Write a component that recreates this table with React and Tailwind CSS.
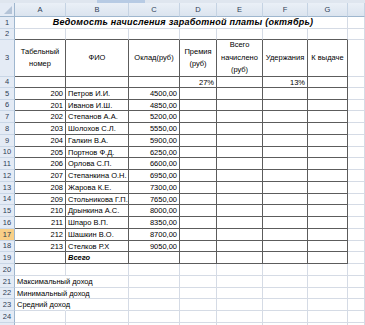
import React from "react";

const emp = [
  [200, "Петров И.И.", "4500,00"],
  [201, "Иванов И.Ш.", "4850,00"],
  [202, "Степанов А.А.", "5200,00"],
  [203, "Шолохов С.Л.", "5550,00"],
  [204, "Галкин В.А.", "5900,00"],
  [205, "Портнов Ф.Д.", "6250,00"],
  [206, "Орлова С.П.", "6600,00"],
  [207, "Степанкина О.Н.", "6950,00"],
  [208, "Жарова К.Е.", "7300,00"],
  [209, "Стольникова Г.П.", "7650,00"],
  [210, "Дрынкина А.С.", "8000,00"],
  [211, "Шпаро В.П.", "8350,00"],
  [212, "Шашкин В.О.", "8700,00"],
  [213, "Стелков Р.Х", "9050,00"],
];

const DARK = "border-r border-b border-r-[#5c5c5c] border-b-[#5c5c5c]";
const LIGHT = "border-r border-b border-r-[#d5dbe5] border-b-[#d5dbe5]";
const TOPDARK = "border-r border-b border-r-[#d5dbe5] border-b-[#5c5c5c]";

const HEADS = [
  ["Табельный", "номер"],
  ["ФИО"],
  ["Оклад(руб)"],
  ["Премия", "(руб)"],
  ["Всего", "начислено", "(руб)"],
  ["Удержания"],
  ["К выдаче"],
];

function cellContent(r, c) {
  if (r === 4) {
    if (c === 3) return { text: "27%", cls: "justify-end" };
    if (c === 5) return { text: "13%", cls: "justify-end" };
  }
  if (r >= 5 && r <= 18) {
    const e = emp[r - 5];
    if (c === 0) return { text: String(e[0]), cls: "justify-end" };
    if (c === 1) return { text: e[1], cls: "justify-start" };
    if (c === 2) return { text: e[2], cls: "justify-end" };
  }
  if (r === 19 && c === 1) return { text: "Всего", cls: "justify-start font-bold italic" };
  if (c === 0 && r === 21) return { text: "Максимальный доход", cls: "justify-start", ov: true };
  if (c === 0 && r === 22) return { text: "Минимальный доход", cls: "justify-start", ov: true };
  if (c === 0 && r === 23) return { text: "Средний доход", cls: "justify-start", ov: true };
  return { text: "", cls: "" };
}

function RowHeader({ r }) {
  const sel = r === 17;
  return (
    <div
      className={
        sel
          ? "border-r border-b border-r-[#9eb6ce] border-b-[#c9d6e6] bg-[#f8cf86] text-[#2b3a4e] flex items-center justify-center"
          : "border-r border-b border-r-[#9eb6ce] border-b-[#c9d6e6] bg-[#e4ebf5] text-[#2f4056] flex items-center justify-center"
      }
    >
      {r <= 24 ? r : ""}
    </div>
  );
}

function Row({ r }) {
  if (r === 1) {
    return (
      <>
        <RowHeader r={r} />
        <div className={"col-span-7 flex items-center justify-center pl-[4px] font-bold italic text-[9px] tracking-[0.25px] whitespace-nowrap " + LIGHT}>
          Ведомость начисления заработной платы (октябрь)
        </div>
        <div className={LIGHT} />
      </>
    );
  }
  if (r === 3) {
    return (
      <>
        <RowHeader r={r} />
        {HEADS.map((lines, c) => (
          <div key={c} className={"flex flex-col items-center justify-center text-center leading-[12.5px] whitespace-nowrap " + DARK}>
            {lines.map((l, i) => (
              <span key={i}>{l}</span>
            ))}
          </div>
        ))}
        <div className={LIGHT} />
      </>
    );
  }
  const cells = [];
  for (let c = 0; c < 7; c++) {
    const { text, cls, ov } = cellContent(r, c);
    let border;
    if (r >= 3 && r <= 19) border = DARK;
    else if (r === 2) border = TOPDARK;
    else if (ov) border = "border-r border-b border-r-transparent border-b-[#d5dbe5]";
    else border = LIGHT;
    cells.push(
      <div
        key={c}
        className={
          "flex items-center px-[2px] pt-[1px] whitespace-nowrap min-w-0 " +
          border +
          (ov ? " overflow-visible " : " overflow-hidden ") +
          cls
        }
      >
        {text}
      </div>
    );
  }
  return (
    <>
      <RowHeader r={r} />
      {cells}
      <div className={LIGHT} />
    </>
  );
}

export default function App() {
  const rows = [];
  for (let r = 1; r <= 25; r++) rows.push(r);
  return (
    <div
      className="w-[365px] h-[325px] overflow-hidden bg-white text-black text-[7.5px] leading-none"
      style={{ fontFamily: '"Liberation Sans", Arial, sans-serif' }}
    >
      <div className="h-[3px] flex">
        <div className="w-[97px] bg-[#dfe6ef]" />
        <div className="w-[48px] bg-[#b7cbe4]" />
        <div className="flex-1 bg-[#dfe6ef]" />
      </div>
      <div className="grid grid-cols-[15px_51px_63px_51px_37px_46px_45px_40px_1fr] grid-rows-[14px_12px_11px_37px_11px_12px_11px_12px_12px_12px_11px_12px_12px_12px_11px_12px_12px_12px_11px_12px_12px_12px_11px_12px_12px_12px]">
        <div className="border-r border-b border-r-[#9eb6ce] border-b-[#9eb6ce] bg-[#e4ebf5] relative">
          <svg className="absolute right-[2px] bottom-[2px]" width="8" height="8" viewBox="0 0 8 8">
            <polygon points="8,0 8,8 0,8" fill="#b4c4d8" />
          </svg>
        </div>
        {["A", "B", "C", "D", "E", "F", "G", ""].map((l, i) => (
          <div
            key={i}
            className="border-r border-b border-r-[#c5d3e3] border-b-[#9eb6ce] bg-gradient-to-b from-[#eaf0f7] to-[#dbe4ef] text-[#2f4056] flex items-center justify-center"
          >
            {l}
          </div>
        ))}
        {rows.map((r) => (
          <Row key={r} r={r} />
        ))}
      </div>
    </div>
  );
}
